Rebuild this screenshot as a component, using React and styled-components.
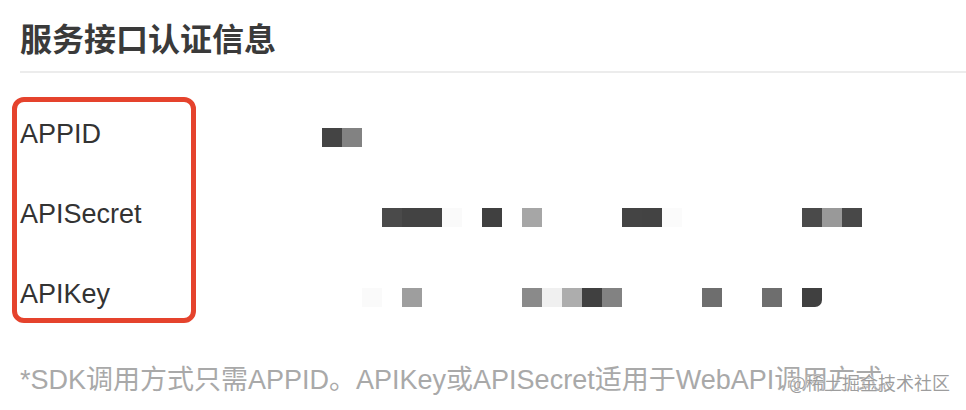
import styled, { createGlobalStyle } from 'styled-components';

const GlobalStyle = createGlobalStyle`
    html, body {
        margin: 0;
        padding: 0;
        background: #FFFFFF;
    }
`

const Page = styled.div`
    position: relative;
    width: 966px;
    height: 410px;
    overflow: hidden;
    padding-left: 20px;
    box-sizing: border-box;
    font-family: "Liberation Sans", "Noto Sans CJK SC", sans-serif;
`

const Title = styled.h2`
    margin: 0;
    padding-top: 17px;
    font-family: "Noto Sans CJK SC", sans-serif;
    font-size: 32px;
    line-height: 40px;
    font-weight: 700;
    color: #3a3a3a;
`

const Divider = styled.div`
    height: 2px;
    margin-top: 14px;
    background: #ececec;
`

const Body = styled.div`
    display: flex;
    align-items: flex-start;
    margin-top: 24px;
    margin-left: -8px;
`

const LabelBox = styled.div`
    width: 184px;
    height: 226px;
    box-sizing: border-box;
    border: 5px solid #e5432d;
    border-radius: 12px;
    padding: 12px 0 0 3px;
    display: flex;
    flex-direction: column;
    gap: 40px;
`

const Label = styled.div`
    height: 40px;
    line-height: 40px;
    font-size: 27px;
    color: #333333;
`

const ValueColumn = styled.div`
    display: flex;
    flex-direction: column;
    gap: 40px;
    padding-top: 20px;
    margin-left: 126px;
`

const ValueRow = styled.div`
    display: flex;
    align-items: center;
    height: 40px;
`

const Cell = styled.div`
    width: 20px;
    height: 19px;
    background: ${props => props.shade || 'transparent'};
    ${props => props.round ? 'border-bottom-right-radius: 7px;' : ''}
`

const Note = styled.p`
    margin: 38px 0 0 0;
    font-size: 27px;
    line-height: 38px;
    color: #a9a9a9;
    white-space: nowrap;
`

const Watermark = styled.div`
    position: absolute;
    right: 16px;
    top: 369px;
    font-family: "Noto Sans CJK SC", sans-serif;
    font-size: 18px;
    line-height: 26px;
    color: rgba(140, 140, 140, 0.85);
    text-shadow: 0 0 2px #ffffff, 0 0 1px #ffffff;
`

// masked values, one entry per 20px cell starting at x = 322
const rows = [
    { label: 'APPID', cells: { 0: '#444444', 1: '#828282' } },
    {
        label: 'APISecret',
        cells: {
            3: '#4a4a4a', 4: '#434343', 5: '#434343', 6: '#fafafa',
            8: '#404040', 10: '#a6a6a6', 15: '#444444', 16: '#434343', 17: '#fbfbfb',
            24: '#4a4a4a', 25: '#999999', 26: '#484848',
        },
    },
    {
        label: 'APIKey',
        cells: {
            2: '#fafafa', 4: '#9e9e9e', 10: '#8a8a8a', 11: '#f0f0f0', 12: '#adadad',
            13: '#404040', 14: '#828282', 19: '#6e6e6e', 22: '#6e6e6e', 24: '#404040',
        },
        round: 24,
    },
]

function App() {
    return (
        <>
            <GlobalStyle />
            <Page>
                <Title>服务接口认证信息</Title>
                <Divider />
                <Body>
                    <LabelBox>
                        {rows.map((row) => (
                            <Label key={row.label}>{row.label}</Label>
                        ))}
                    </LabelBox>
                    <ValueColumn>
                        {rows.map((row) => (
                            <ValueRow key={row.label}>
                                {Array.from({ length: 27 }, (_, i) => (
                                    <Cell key={i} shade={row.cells[i]} round={row.round === i} />
                                ))}
                            </ValueRow>
                        ))}
                    </ValueColumn>
                </Body>
                <Note>*SDK调用方式只需APPID。APIKey或APISecret适用于WebAPI调用方式。</Note>
                <Watermark>@稀土掘金技术社区</Watermark>
            </Page>
        </>
    );
}

export default App;
